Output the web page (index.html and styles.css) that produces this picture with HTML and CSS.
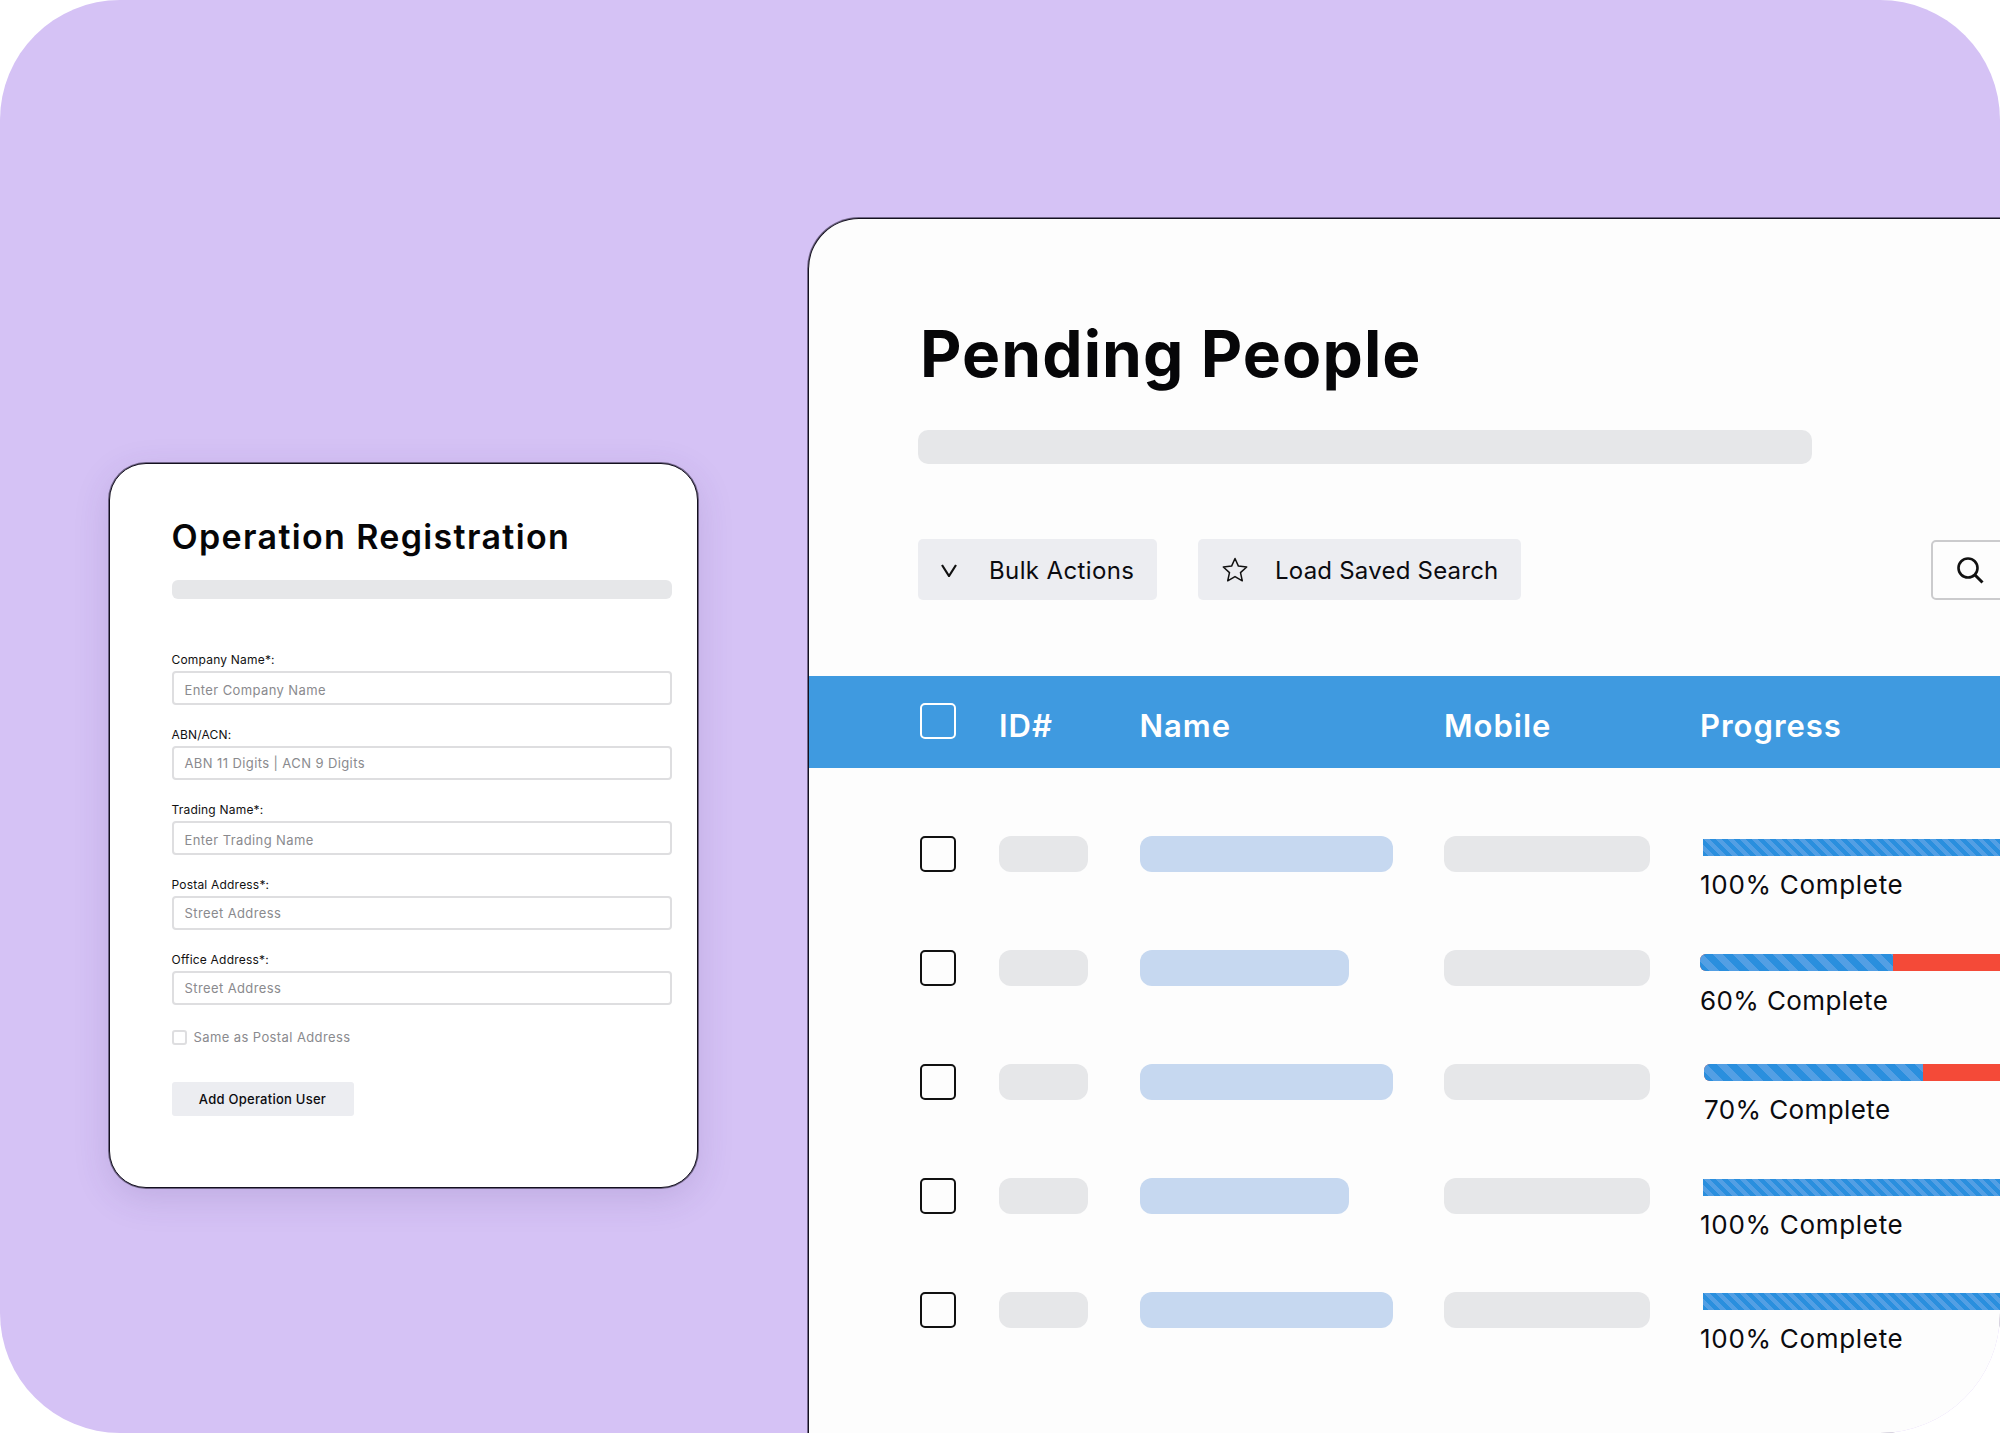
FILE: index.html
```html
<!DOCTYPE html>
<html lang="en">
<head>
<meta charset="utf-8">
<title>Pending People</title>
<link rel="stylesheet" href="styles.css">
</head>
<body>
<main class="stage">
  <section class="card">
    <h2 class="card-title">Operation Registration</h2>
    <div class="card-bar"></div>
    <div class="fields">
      <div class="field"><div class="label">Company Name*:</div><div class="input low">Enter Company Name</div></div>
      <div class="field"><div class="label">ABN/ACN:</div><div class="input">ABN 11 Digits | ACN 9 Digits</div></div>
      <div class="field"><div class="label">Trading Name*:</div><div class="input low">Enter Trading Name</div></div>
      <div class="field"><div class="label">Postal Address*:</div><div class="input">Street Address</div></div>
      <div class="field"><div class="label">Office Address*:</div><div class="input">Street Address</div></div>
    </div>
    <div class="same"><span class="same-box"></span><span>Same as Postal Address</span></div>
    <div class="add-btn">Add Operation User</div>
  </section>

  <section class="panel">
    <h1 class="panel-title">Pending People</h1>
    <div class="panel-bar"></div>
    <div class="toolbar">
      <div class="tool tool-bulk">
        <svg class="icon-chev" viewBox="0 0 16 13" width="16" height="13" aria-hidden="true"><path d="M1 1l7 11 7-11" fill="none" stroke="#111" stroke-width="2.2"/></svg>
        <span>Bulk Actions</span>
      </div>
      <div class="tool tool-load">
        <svg class="icon-star" viewBox="0 0 26 26" width="26" height="26" aria-hidden="true"><path d="M13 1.5l3.4 7.6 8.3.9-6.2 5.6 1.8 8.2-7.3-4.2-7.3 4.2 1.8-8.2L1.300 10l8.300-.9z" fill="none" stroke="#111" stroke-width="1.500" stroke-linejoin="round"/></svg>
        <span>Load Saved Search</span>
      </div>
      <div class="search">
        <svg viewBox="0 0 28 28" width="28" height="28" aria-hidden="true"><circle cx="12" cy="12" r="9.500" fill="none" stroke="#111" stroke-width="2.600"/><path d="M19 19l7.500 7.500" fill="none" stroke="#111" stroke-width="3"/></svg>
      </div>
    </div>

    <div class="thead">
      <span class="check check-light"></span>
      <span>ID#</span>
      <span>Name</span>
      <span>Mobile</span>
      <span>Progress</span>
    </div>

    <div class="rows">
      <div class="row">
        <span class="check"></span><span class="pill pill-id"></span><span class="pill pill-name"></span><span class="pill pill-mobile"></span>
        <div class="prog prog-1"><div class="track fine"></div><div class="prog-text">100% Complete</div></div>
      </div>
      <div class="row">
        <span class="check"></span><span class="pill pill-id"></span><span class="pill pill-name short"></span><span class="pill pill-mobile"></span>
        <div class="prog prog-2"><div class="track rounded"><div class="done" style="width:193px"></div></div><div class="prog-text">60% Complete</div></div>
      </div>
      <div class="row">
        <span class="check"></span><span class="pill pill-id"></span><span class="pill pill-name"></span><span class="pill pill-mobile"></span>
        <div class="prog prog-3"><div class="track rounded"><div class="done" style="width:219px"></div></div><div class="prog-text">70% Complete</div></div>
      </div>
      <div class="row">
        <span class="check"></span><span class="pill pill-id"></span><span class="pill pill-name short"></span><span class="pill pill-mobile"></span>
        <div class="prog prog-4"><div class="track fine"></div><div class="prog-text">100% Complete</div></div>
      </div>
      <div class="row">
        <span class="check"></span><span class="pill pill-id"></span><span class="pill pill-name"></span><span class="pill pill-mobile"></span>
        <div class="prog prog-4"><div class="track fine"></div><div class="prog-text">100% Complete</div></div>
      </div>
    </div>
  </section>
</main>
</body>
</html>
```
FILE: styles.css
```css
* { box-sizing: border-box; }
html, body { margin: 0; padding: 0; background: #fff; }
body { font-family: Inter, "Liberation Sans", sans-serif; color: #0b0b0f; }

.stage {
  position: relative;
  width: 2000px;
  height: 1433px;
  background: #d5c2f5;
  border-radius: 120px;
  overflow: hidden;
}

/* Floating form card */
.card {
  position: absolute;
  left: 109px;
  top: 463px;
  width: 589px;
  height: 725px;
  padding: 53px 25px 0 61.5px;
  background: #fff;
  border: 1px solid #14101f;
  border-radius: 37px;
  box-shadow: 0 0 0 1px rgba(32, 27, 48, 0.55), 0 10px 36px rgba(70, 45, 120, 0.15);
}
.card-title {
  margin: 0;
  font-size: 34px;
  line-height: 40px;
  font-weight: 600;
  letter-spacing: 1.35px;
  color: #060608;
}
.card-bar { height: 19px; margin-top: 23px; background: #e6e7e9; border-radius: 6px; }
.fields { display: grid; row-gap: 22px; margin-top: 53px; }
.label { height: 16px; font-size: 12px; line-height: 16px; letter-spacing: 0.2px; color: #111; margin-bottom: 3px; }
.input {
  height: 34px;
  padding-left: 11px;
  border: 2px solid #dedee0;
  border-radius: 4px;
  font-size: 13px;
  line-height: 30px;
  letter-spacing: 0.4px;
  color: #8a8a8e;
  background: #fff;
}
.input.low { line-height: 34px; }
.same { display: flex; align-items: center; gap: 7px; margin-top: 24px; font-size: 13px; letter-spacing: 0.4px; color: #8a8a8e; height: 16px; }
.same-box { width: 15px; height: 15px; border: 2px solid #dedee0; border-radius: 3px; flex: none; }
.add-btn {
  width: 182px;
  height: 34px;
  margin-top: 37px;
  background: #ecedf1;
  border-radius: 3px;
  font-size: 13px;
  font-weight: 500;
  line-height: 34px;
  letter-spacing: 0.25px;
  text-align: center;
  color: #0b0b0f;
}

/* Main table panel */
.panel {
  position: absolute;
  left: 808px;
  top: 218px;
  right: 0;
  bottom: 0;
  background: #fdfdfd;
  border-top: 1px solid #14101f;
  border-left: 1px solid #14101f;
  border-top-left-radius: 51px;
  box-shadow: 0 0 0 1px rgba(32, 27, 48, 0.55);
  overflow: hidden;
}
.panel-title {
  margin: 0;
  padding: 99px 0 0 111px;
  font-size: 64px;
  line-height: 72px;
  font-weight: 700;
  letter-spacing: 1.1px;
  color: #060608;
}
.panel-bar { width: 894px; height: 34px; margin: 40px 0 0 109px; background: #e6e7e9; border-radius: 10px; }

.toolbar { display: flex; align-items: center; height: 61px; margin-top: 75px; padding-left: 109px; }
.tool {
  display: flex;
  align-items: center;
  height: 61px;
  padding-top: 1px;
  background: #ecedf1;
  border-radius: 5px;
  font-size: 24px;
  letter-spacing: 0.38px;
  color: #0b0b0f;
}
.tool-bulk { width: 239px; padding-left: 23px; gap: 32px; }
.tool-load { width: 323px; margin-left: 41px; padding-left: 24px; gap: 27px; letter-spacing: 0.22px; }
.search {
  display: flex;
  align-items: center;
  width: 80px;
  height: 60px;
  margin-left: auto;
  margin-right: -11px;
  padding-left: 23px;
  background: #fdfdfd;
  border: 2px solid #cbcbcd;
  border-radius: 5px;
  flex: none;
}

.thead, .row {
  display: grid;
  grid-template-columns: 79px 140.5px 304.5px 256px 1fr;
  padding-left: 111px;
}
.thead {
  align-items: center;
  height: 92px;
  margin-top: 76px;
  padding-top: 7px;
  background: #3f9ae0;
  color: #fff;
  font-size: 31px;
  font-weight: 600;
  letter-spacing: 1px;
}
.thead .check { margin-top: -9px; }
.rows { margin-top: 68px; }
.row { height: 114px; align-items: start; }

.check { display: block; width: 36px; height: 36px; border: 2px solid #111; border-radius: 5px; background: transparent; }
.check-light { border-color: #fff; }

.pill { display: block; height: 36px; border-radius: 12px; background: #e6e7e9; }
.pill-id { width: 89px; }
.pill-name { width: 253px; background: #c6d8f0; }
.pill-name.short { width: 209px; }
.pill-mobile { width: 206px; }

.prog { min-width: 0; }
.prog-1 { padding-top: 3px; }
.prog-2 { padding-top: 4px; }
.prog-3 { padding-top: 0; padding-left: 4px; }
.prog-4 { padding-top: 1px; }

.track { height: 17px; background: #f44a38; position: relative; overflow: hidden; }
.fine {
  margin-left: 3px;
  background: repeating-linear-gradient(45deg, #2a8fde 0 4.2px, #539fe4 4.2px 8.4px);
}
.rounded { border-radius: 6px 0 0 6px; }
.done {
  height: 100%;
  background: repeating-linear-gradient(45deg, #2a8fde 0 7px, #539fe4 7px 14px);
}
.prog-text {
  margin-top: 13px;
  font-size: 26px;
  line-height: 32px;
  letter-spacing: 0.7px;
  color: #0b0b0f;
  white-space: nowrap;
}
.prog-2 .prog-text { margin-top: 14px; letter-spacing: 0.4px; }
.prog-3 .prog-text { letter-spacing: 0.4px; }
```
